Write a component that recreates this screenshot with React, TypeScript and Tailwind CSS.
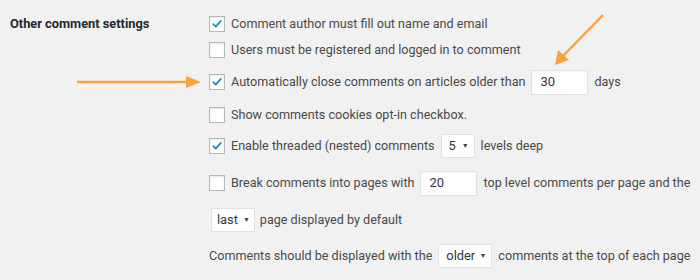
import React from "react";

function Check({ checked }: { checked?: boolean }) {
  return (
    <span className="inline-flex h-4 w-4 shrink-0 items-center justify-center border border-[#b4b9be] bg-white shadow-[inset_0_1px_2px_rgba(0,0,0,0.1)]">
      {checked && (
        <svg viewBox="0 0 16 16" className="h-[14px] w-[14px]">
          <path d="M3.7 8.2 L6.6 11 L12.4 4.4" fill="none" stroke="#1e8cbe" strokeWidth="2" strokeLinecap="round" strokeLinejoin="round" />
        </svg>
      )}
    </span>
  );
}

function TextBox({ value, w }: { value: string; w: string }) {
  return (
    <span className={`inline-flex h-[25px] shrink-0 items-center border border-[#e2e2e2] bg-white px-2 text-[13px] text-[#32373c] shadow-[inset_0_1px_2px_rgba(0,0,0,0.04)] ${w}`}>
      {value}
    </span>
  );
}

function Select({ value, cls }: { value: string; cls: string }) {
  return (
    <span className={`inline-flex h-[24px] shrink-0 items-center justify-between border border-[#e2e2e2] bg-white text-[12.8px] text-[#32373c] ${cls}`}>
      <span>{value}</span>
      <span className="text-[7px] text-[#444]">▼</span>
    </span>
  );
}

export default function App() {
  return (
    <div className="relative h-[280px] w-[700px] overflow-hidden whitespace-nowrap bg-[#f1f1f1] font-['Roboto','Noto_Sans',sans-serif] text-[12.6px] text-[#4a4a4a]">
      <div className="flex pt-[11px]">
        <div className="w-[209px] shrink-0 pl-[10px]">
          <div className="flex h-[26px] items-center text-[12.8px] font-bold text-[#23282d]">Other comment settings</div>
        </div>
        <div className="flex flex-col">
          <div className="flex h-[26px] items-center gap-[6px]">
            <Check checked />
            <span>Comment author must fill out name and email</span>
          </div>
          <div className="flex h-[26px] items-center gap-[6px]">
            <Check />
            <span>Users must be registered and logged in to comment</span>
          </div>
          <div className="flex h-[38px] items-center gap-[6px]">
            <Check checked />
            <span>Automatically close comments on articles older than</span>
            <TextBox value="30" w="w-[57px]" />
            <span>days</span>
          </div>
          <div className="flex h-[28px] items-center gap-[6px]">
            <Check />
            <span>Show comments cookies opt-in checkbox.</span>
          </div>
          <div className="flex h-[34px] items-center gap-[6px]">
            <Check checked />
            <span>Enable threaded (nested) comments</span>
            <Select value="5" cls="w-[34px] pl-[7px] pr-[5px]" />
            <span>levels deep</span>
          </div>
          <div className="flex h-[40px] items-center gap-[6px]">
            <Check />
            <span>Break comments into pages with</span>
            <TextBox value="20" w="w-[57px]" />
            <span>top level comments per page and the</span>
          </div>
          <div className="flex h-[34px] items-center gap-[5px] pl-[2px]">
            <Select value="last" cls="gap-[5px] pl-[5px] pr-[4px]" />
            <span>page displayed by default</span>
          </div>
          <div className="flex h-[38px] items-center gap-[6px]">
            <span>Comments should be displayed with the</span>
            <Select value="older" cls="w-[54px] pl-[7px] pr-[5px]" />
            <span>comments at the top of each page</span>
          </div>
        </div>
      </div>

      <svg className="pointer-events-none absolute left-0 top-0" width="700" height="280">
        <line x1="77" y1="82" x2="190" y2="82" stroke="#f8a43c" strokeWidth="2.5" />
        <polygon points="186,76 201,82 186,88" fill="#f8a43c" />
        <line x1="603" y1="15" x2="562" y2="57" stroke="#f8a43c" strokeWidth="2.5" />
        <polygon points="555,65 558,50 569,60" fill="#f8a43c" />
      </svg>
    </div>
  );
}
